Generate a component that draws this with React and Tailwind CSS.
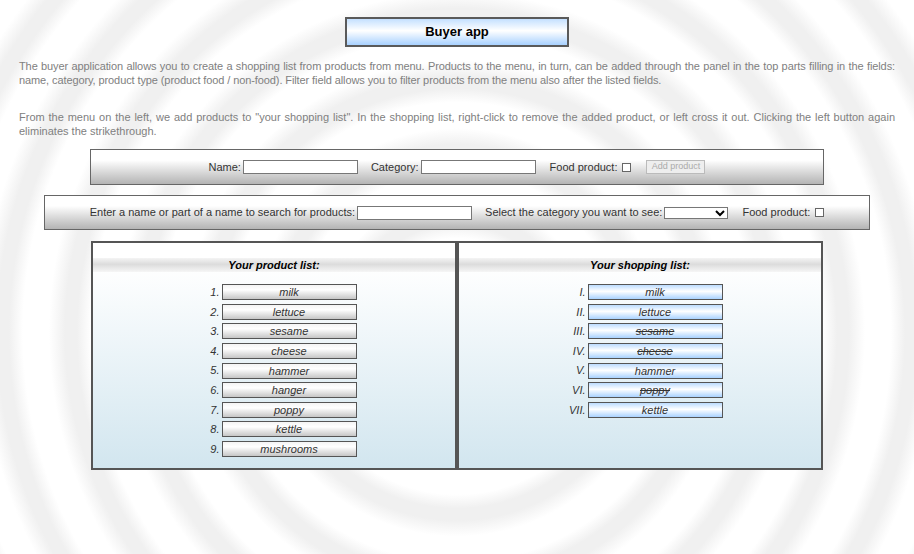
import React from 'react';

const products = ['milk', 'lettuce', 'sesame', 'cheese', 'hammer', 'hanger', 'poppy', 'kettle', 'mushrooms'];

const shopping = [
  { name: 'milk', done: false },
  { name: 'lettuce', done: false },
  { name: 'sesame', done: true },
  { name: 'cheese', done: true },
  { name: 'hammer', done: false },
  { name: 'poppy', done: true },
  { name: 'kettle', done: false },
];

const roman = ['I.', 'II.', 'III.', 'IV.', 'V.', 'VI.', 'VII.'];

function ListColumn({ title, children }) {
  return (
    <div className="flex-1 border-2 border-[#555] bg-gradient-to-b from-white from-10% to-[#d2e6ef]">
      <div className="mt-[15px] h-[14px] bg-[linear-gradient(to_bottom,#f4f4f4,#dcdcdc_45%,#f6f6f6)] text-center text-[11px] font-bold italic leading-[14px] text-black">
        {title}
      </div>
      <div className="mt-[12px] flex flex-col items-center gap-[3px]">{children}</div>
    </div>
  );
}

function ListItem({ label, name, done, blue }) {
  return (
    <div className="flex h-[16.6px] items-center">
      <span className="w-[30px] pr-[2px] text-right text-[11px] italic text-[#333]">{label}</span>
      <div
        className={
          'h-[16px] w-[135px] border border-[#555] text-center text-[11px] italic leading-[14px] text-[#333] ' +
          (blue
            ? 'bg-[linear-gradient(to_bottom,#bcdcff,#ffffff_45%,#a9d2ff)]'
            : 'bg-[linear-gradient(to_bottom,#f4f4f4,#ffffff_35%,#c6c6c6)]') +
          (done ? ' line-through' : '')
        }
      >
        {name}
      </div>
    </div>
  );
}

export default function App() {
  return (
    <div className="h-[554px] w-full overflow-hidden bg-[repeating-radial-gradient(circle_at_50%_60%,#ffffff_0px,#ffffff_26px,#f0f0f0_40px,#f0f0f0_52px,#ffffff_68px)] font-['Liberation_Sans',sans-serif]">
      <div className="flex justify-center pt-[17px]">
        <div className="flex h-[30px] w-[224px] items-center justify-center border-2 border-[#5a5a5a] bg-[linear-gradient(to_bottom,#c4e0ff,#ffffff_45%,#a8d1ff)] text-[13px] font-bold text-black">
          Buyer app
        </div>
      </div>

      <div className="px-[19px] pt-[12px] text-justify text-[11px] leading-[14px] text-[#808080]">
        <p className="tracking-[-0.1px]">
          The buyer application allows you to create a shopping list from products from menu. Products to the menu, in turn, can be added through the panel in the top parts filling in the fields: name, category, product type (product food / non-food). Filter field allows you to filter products from the menu also after the listed fields.
        </p>
        <p className="mt-[23px]">
          From the menu on the left, we add products to "your shopping list". In the shopping list, right-click to remove the added product, or left cross it out. Clicking the left button again eliminates the strikethrough.
        </p>
      </div>

      <div className="mx-[90px] mt-[11px] flex h-[36px] items-center justify-center border border-[#666] bg-gradient-to-b from-white from-30% to-[#b4b4b4] text-[11px] text-[#333]">
        <span>Name:</span>
        <span className="ml-[2px] h-[14px] w-[115px] border border-[#777] bg-white" />
        <span className="ml-[13px]">Category:</span>
        <span className="ml-[2px] h-[14px] w-[115px] border border-[#777] bg-white" />
        <span className="ml-[14px]">Food product:</span>
        <span className="ml-[5px] h-[9px] w-[9px] border border-[#666] bg-white" />
        <span className="ml-[15px] flex h-[14px] w-[59px] items-center justify-center border border-[#bbb] bg-[#eeeeee] text-[9px] text-[#aaa]">
          Add product
        </span>
      </div>

      <div className="mx-[44px] mt-[10px] flex h-[35px] items-center justify-center border border-[#666] bg-gradient-to-b from-white from-30% to-[#b4b4b4] text-[11px] text-[#333]">
        <span>Enter a name or part of a name to search for products:</span>
        <span className="ml-[2px] h-[14px] w-[115px] border border-[#777] bg-white" />
        <span className="ml-[13px]">Select the category you want to see:</span>
        <span className="ml-[2px] flex h-[12px] w-[64px] items-center justify-end border border-[#777] bg-white pr-[2px]">
          <svg width="10" height="8" viewBox="0 0 10 8">
            <path d="M1 2 L5 6 L9 2" fill="none" stroke="#000" strokeWidth="2" />
          </svg>
        </span>
        <span className="ml-[14px]">Food product:</span>
        <span className="ml-[5px] h-[9px] w-[9px] border border-[#666] bg-white" />
      </div>

      <div className="mx-[91px] mt-[11px] flex h-[229px]">
        <ListColumn title="Your product list:">
          {products.map((p, i) => (
            <ListItem key={p} label={i + 1 + '.'} name={p} />
          ))}
        </ListColumn>
        <ListColumn title="Your shopping list:">
          {shopping.map((s, i) => (
            <ListItem key={s.name} label={roman[i]} name={s.name} done={s.done} blue />
          ))}
        </ListColumn>
      </div>
    </div>
  );
}
